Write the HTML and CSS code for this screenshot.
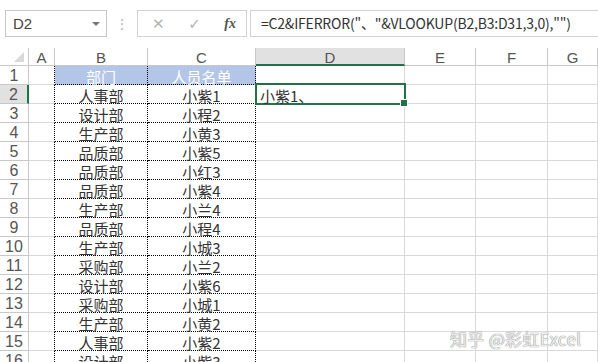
FILE: index.html
```html
<!DOCTYPE html>
<html lang="zh-CN">
<head>
  <meta charset="UTF-8" />
  <title>Excel - VLOOKUP</title>
  <link rel="stylesheet" href="styles.css">
</head>
<body>

  <!-- Formula bar -->
  <div class="formula-bar">
    <div class="name-box">
      <span>D2</span>
      <span class="caret"></span>
    </div>
    <div class="grip">⋮</div>
    <div class="fx-btns">
      <span class="btn-x">✕</span>
      <span class="btn-ok">✓</span>
      <span class="btn-fx">fx</span>
    </div>
    <div class="formula-input">=C2&amp;IFERROR("、"&amp;VLOOKUP(B2,B3:D31,3,0),"")</div>
  </div>

  <!-- Sheet -->
  <div class="sheet" id="sheet"></div>

  <div class="watermark">知乎 @彩虹Excel</div>

  <script>
    const cols = ["A", "B", "C", "D", "E", "F", "G"];
    const dept = ["部门", "人事部", "设计部", "生产部", "品质部", "品质部", "品质部", "生产部",
      "品质部", "生产部", "采购部", "设计部", "采购部", "生产部", "人事部", "设计部"];
    const names = ["人员名单", "小紫1", "小程2", "小黄3", "小紫5", "小红3", "小紫4", "小兰4",
      "小程4", "小城3", "小兰2", "小紫6", "小城1", "小黄2", "小紫2", "小紫3"];

    const sheet = document.getElementById("sheet");

    function cell(cls, text) {
      const el = document.createElement("div");
      el.className = cls;
      if (text) el.textContent = text;
      sheet.appendChild(el);
      return el;
    }

    // column headers
    cell("corner");
    cols.forEach(c => cell("col-head" + (c === "D" ? " active" : ""), c));

    // rows
    for (let r = 0; r < dept.length; r++) {
      const n = r + 1;
      cell("row-head" + (n === 2 ? " active" : ""), n);
      cell("cell col-a");
      cell("cell dot" + (n === 1 ? " title" : ""), dept[r]);
      cell("cell dot" + (n === 1 ? " title" : ""), names[r]);
      const d = cell("cell col-d", n === 2 ? "小紫1、" : "");
      if (n === 2) d.classList.add("selected");
      cell("cell");
      cell("cell");
      cell("cell");
    }
  </script>
</body>
</html>
```

FILE: styles.css
```css
:root {
  --green: #217346;
  --grid: #d9d9d9;
  --head-line: #c8c8c8;
  --text: #333333;
  --title-bg: #b4c6e7;
}

* {
  margin: 0;
  padding: 0;
  box-sizing: border-box;
}

body {
  font-family: "Noto Sans CJK SC", "Liberation Sans", sans-serif;
  background: #ffffff;
  color: var(--text);
  overflow: hidden;
  width: 598px;
  height: 362px;
  position: relative;
}

/* Formula bar */
.formula-bar {
  height: 48px;
  display: flex;
  align-items: flex-start;
  padding-top: 10px;
  padding-left: 5px;
}

.name-box {
  width: 102px;
  height: 27px;
  border: 1px solid #c6c6c6;
  display: flex;
  align-items: center;
  justify-content: space-between;
  padding: 0 6px 0 7px;
  font-family: "Liberation Sans", sans-serif;
  font-size: 15px;
  color: #444;
}

.caret {
  width: 0;
  height: 0;
  border-left: 4px solid transparent;
  border-right: 4px solid transparent;
  border-top: 4px solid #777;
}

.grip {
  width: 30px;
  height: 27px;
  line-height: 27px;
  text-align: center;
  color: #b8b8b8;
  font-size: 14px;
}

.fx-btns {
  width: 110px;
  height: 27px;
  border: 1px solid #d2d2d2;
  display: flex;
  align-items: center;
  justify-content: space-between;
  padding: 0 10px 0 14px;
}

.btn-x, .btn-ok {
  color: #b3b3b3;
  font-size: 15px;
  font-family: "DejaVu Sans", sans-serif;
}

.btn-fx {
  font-family: "Liberation Serif", serif;
  font-style: italic;
  font-weight: bold;
  font-size: 14px;
  color: #555;
}

.formula-input {
  flex: 1;
  height: 27px;
  margin-left: 3px;
  border: 1px solid #d2d2d2;
  border-right: none;
  padding-left: 10px;
  line-height: 25px;
  font-size: 14px;
  color: #333;
  white-space: nowrap;
  letter-spacing: -0.2px;
}

/* Sheet grid */
.sheet {
  width: 598px;
  overflow: hidden;
  display: grid;
  grid-template-columns: 29px 26px 93px 108px 149px 71px 72px 1fr;
  grid-template-rows: 18px;
  grid-auto-rows: 19px;
}

.corner,
.col-head,
.row-head {
  background: #ffffff;
  color: #555;
  font-size: 15px;
  font-family: "Liberation Sans", sans-serif;
  display: flex;
  align-items: center;
  justify-content: center;
}

.corner {
  border-right: 1px solid var(--head-line);
  border-bottom: 1px solid var(--head-line);
  position: relative;
}

.corner::after {
  content: "";
  position: absolute;
  right: 4px;
  bottom: 3px;
  border-left: 10px solid transparent;
  border-bottom: 10px solid #d9d9d9;
}

.col-head {
  border-right: 1px solid var(--head-line);
  border-bottom: 1px solid var(--head-line);
  line-height: 1;
  padding-top: 2px;
}

.col-head.active {
  background: #e1e1e1;
  border-bottom: 2px solid var(--green);
}

.row-head {
  border-right: 1px solid var(--head-line);
  border-bottom: 1px solid var(--head-line);
  font-size: 16px;
  padding-top: 1px;
}

.row-head.active {
  background: #e1e1e1;
  border-right: 2px solid var(--green);
}

.cell {
  border-right: 1px solid var(--grid);
  border-bottom: 1px solid var(--grid);
  font-size: 15px;
  line-height: 1;
  white-space: nowrap;
  display: flex;
  align-items: center;
  padding-top: 2px;
}

.col-a {
  border-right: 1px dotted #000;
}

.dot {
  border-right: 1px dotted #000;
  border-bottom: 1px dotted #000;
  justify-content: center;
}

.dot.title {
  background: var(--title-bg);
  color: #ffffff;
}

.col-d {
  padding-left: 3px;
}

.selected {
  position: relative;
  border: 2px solid var(--green);
  margin: -2px -1px -1px -1px;
  padding-left: 3px;
}

.selected::after {
  content: "";
  position: absolute;
  right: -4px;
  bottom: -4px;
  width: 6px;
  height: 6px;
  background: var(--green);
  border: 1px solid #ffffff;
}

/* Watermark */
.watermark {
  position: absolute;
  left: 450px;
  top: 326px;
  font-size: 17px;
  color: rgba(255, 255, 255, 0.85);
  text-shadow: 0 0 1px #8a8a8a, 0 0 1px #8a8a8a;
  letter-spacing: 0.3px;
}
```
